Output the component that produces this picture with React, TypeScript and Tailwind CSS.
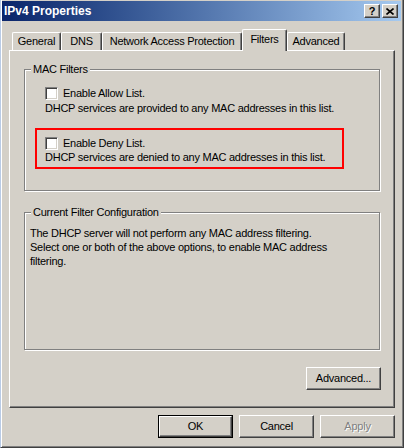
import React from "react";

const raised =
  "bg-[#d4d0c8] border border-t-white border-l-white border-r-[#404040] border-b-[#404040] shadow-[inset_-1px_-1px_0_#808080]";

const Checkbox = () => (
  <span className="block w-[13px] h-[13px] shrink-0 bg-white border border-t-[#808080] border-l-[#808080] border-r-white border-b-white shadow-[inset_1px_1px_0_#404040,inset_-1px_-1px_0_#d4d0c8]" />
);

const Tab = ({
  label,
  width,
  active,
}: {
  label: string;
  width: string;
  active?: boolean;
}) => {
  if (active) {
    return (
      <div
        className={`${width} relative z-10 h-[22px] -mb-[1px] flex items-center justify-center pb-[2px] bg-[#d4d0c8] border-t border-l border-t-white border-l-white border-r border-r-[#404040] shadow-[inset_-1px_0_0_#808080] rounded-t-[2px]`}
      >
        {label}
      </div>
    );
  }
  return (
    <div
      className={`${width} h-[18px] flex items-center justify-center bg-[#d4d0c8] border-t border-l border-t-white border-l-white border-r border-r-[#404040] shadow-[inset_-1px_0_0_#808080] rounded-t-[2px]`}
    >
      {label}
    </div>
  );
};

const Button = ({
  children,
  disabled,
  isDefault,
}: {
  children: React.ReactNode;
  disabled?: boolean;
  isDefault?: boolean;
}) => {
  const inner = (
    <div
      className={`${raised} h-full w-full flex items-center justify-center ${
        disabled ? "text-[#808080] [text-shadow:1px_1px_0_#fff]" : ""
      }`}
    >
      {children}
    </div>
  );
  if (isDefault) {
    return (
      <div className="w-[75px] h-[23px] border border-black">{inner}</div>
    );
  }
  return <div className="w-[75px] h-[23px]">{inner}</div>;
};

export default function App() {
  return (
    <div className="w-[404px] h-[448px] bg-[#d4d0c8] flex flex-col border-l border-l-[#b9cbe6] border-r border-r-[#404040] border-b border-b-[#404040] shadow-[inset_1px_0_0_#fff,inset_-1px_-1px_0_#808080] text-black text-[11px] leading-[13px] tracking-[-0.25px] font-['Liberation_Sans',Arial,sans-serif] overflow-hidden">
      {/* title bar */}
      <div className="mt-[1px] ml-[1px] mr-[2px] h-[20px] flex items-center bg-linear-to-r from-[#0a246a] to-[#a6caf0] pl-[2px] pr-[3px]">
        <span className="text-white font-bold text-[12px] leading-[14px] tracking-normal">
          IPv4 Properties
        </span>
        <div className="ml-auto flex gap-[2px]">
          <div
            className={`${raised} w-[16px] h-[14px] flex items-center justify-center font-bold text-[11px] leading-[11px]`}
          >
            ?
          </div>
          <div
            className={`${raised} w-[16px] h-[14px] flex items-center justify-center`}
          >
            <svg width="8" height="7" viewBox="0 0 8 7">
              <path
                d="M0.5 0.5 L7.5 6.5 M7.5 0.5 L0.5 6.5"
                stroke="#000"
                strokeWidth="1.6"
              />
            </svg>
          </div>
        </div>
      </div>

      {/* body */}
      <div className="flex flex-col pl-[8px] pr-[8px]">
        <div className="mt-[8px] h-[21px] flex items-end pl-[3px]">
          <Tab label="General" width="w-[49px]" />
          <Tab label="DNS" width="w-[41px]" />
          <Tab label="Network Access Protection" width="w-[140px]" />
          <Tab label="Filters" width="w-[45px]" active />
          <Tab label="Advanced" width="w-[58px]" />
        </div>

        <div className="w-[386px] h-[358px] border-t border-l border-t-white border-l-white border-r border-b border-r-[#404040] border-b-[#404040] shadow-[inset_-1px_-1px_0_#808080] pl-[14px] pt-[18px] flex flex-col">
          {/* MAC Filters */}
          <div className="relative w-[356px] h-[122px] shrink-0 border border-[#808080] shadow-[inset_1px_1px_0_#fff,1px_1px_0_#fff] pt-[17px]">
            <span className="absolute left-[6px] top-[-7px] px-[2px] bg-[#d4d0c8]">
              MAC Filters
            </span>
            <div className="ml-[20px]">
              <div className="flex items-center gap-[5px] h-[13px]">
                <Checkbox />
                <span>Enable Allow List.</span>
              </div>
              <div className="mt-[2px]">
                DHCP services are provided to any MAC addresses in this list.
              </div>
            </div>
            <div className="ml-[10px] mt-[13px] w-[309px] h-[41px] border-2 border-[#ff0000] pl-[8px] pt-[7px]">
              <div className="flex items-center gap-[5px] h-[13px]">
                <Checkbox />
                <span>Enable Deny List.</span>
              </div>
              <div className="mt-[1px]">
                DHCP services are denied to any MAC addresses in this list.
              </div>
            </div>
          </div>

          {/* Current Filter Configuration */}
          <div className="relative mt-[21px] w-[356px] h-[138px] shrink-0 border border-[#808080] shadow-[inset_1px_1px_0_#fff,1px_1px_0_#fff] pt-[13px] pl-[5px] leading-[14px]">
            <span className="absolute left-[6px] top-[-7px] px-[2px] bg-[#d4d0c8] leading-[13px]">
              Current Filter Configuration
            </span>
            <p>
              The DHCP server will not perform any MAC address filtering.
              <br />
              Select one or both of the above options, to enable MAC address
              <br />
              filtering.
            </p>
          </div>

          <div className="w-[357px] mt-[17px] flex justify-end">
            <Button>Advanced...</Button>
          </div>
        </div>

        <div className="mt-[7px] flex justify-end gap-[6px]">
          <Button isDefault>OK</Button>
          <Button>Cancel</Button>
          <Button disabled>Apply</Button>
        </div>
      </div>
    </div>
  );
}
